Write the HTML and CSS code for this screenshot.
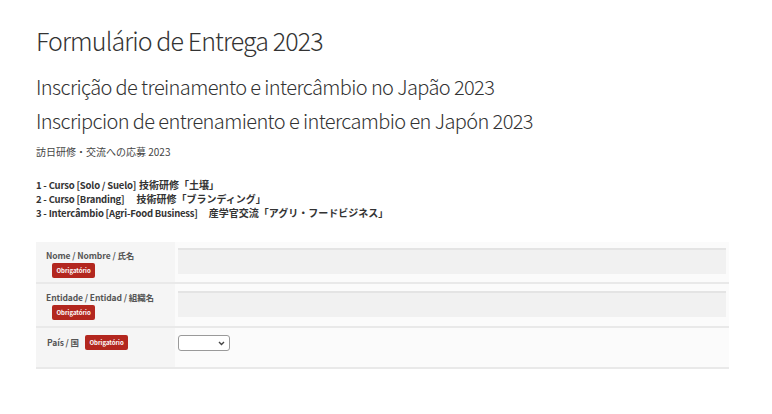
FILE: index.html
```html
<!DOCTYPE html>
<html lang="pt">
<head>
<meta charset="utf-8">
<link rel="stylesheet" href="styles.css">
</head>
<body>
<div class="page">
  <h1 class="title">Formulário de Entrega 2023</h1>
  <h2 class="subtitle first">Inscrição de treinamento e intercâmbio no Japão 2023</h2>
  <h2 class="subtitle">Inscripcion de entrenamiento e intercambio en Japón 2023</h2>
  <p class="jp">訪日研修・交流への応募 2023</p>
  <div class="courses">
    <div class="course"><span class="lat">1 - Curso [Solo / Suelo]</span><span class="cjk gap-s">技術研修「土壌」</span></div>
    <div class="course"><span class="lat">2 - Curso [Branding]</span><span class="cjk gap-l">技術研修「ブランディング」</span></div>
    <div class="course"><span class="lat">3 - Intercâmbio [Agri-Food Business]</span><span class="cjk gap-m">産学官交流「アグリ・フードビジネス」</span></div>
  </div>
  <div class="form">
    <div class="row r1">
      <div class="label">
        <div class="name">Nome / Nombre / 氏名</div>
        <span class="badge">Obrigatório</span>
      </div>
      <div class="field"><div class="input"></div></div>
    </div>
    <div class="row r2">
      <div class="label">
        <div class="name">Entidade / Entidad / 組織名</div>
        <span class="badge">Obrigatório</span>
      </div>
      <div class="field"><div class="input"></div></div>
    </div>
    <div class="row r3">
      <div class="label inline">
        <span class="name">País / 国</span>
        <span class="badge">Obrigatório</span>
      </div>
      <div class="field">
        <div class="select">
          <svg width="7" height="5" viewBox="0 0 7 5"><path d="M1 1 L3.5 3.5 L6 1" fill="none" stroke="#444" stroke-width="1.4"/></svg>
        </div>
      </div>
    </div>
  </div>
</div>
</body>
</html>
```

FILE: styles.css
```css
* { box-sizing: border-box; }
html, body { margin: 0; padding: 0; background: #fff; }
body {
  font-family: "Noto Sans CJK JP", "Noto Sans", sans-serif;
  color: #333;
}
.page {
  padding: 25px 43px 0 36px;
}
.title {
  margin: 0;
  font-size: 25px;
  font-weight: 300;
  letter-spacing: -0.9px;
  line-height: 30px;
  color: #333;
}
.subtitle {
  margin: 0;
  font-size: 20px;
  font-weight: 300;
  letter-spacing: -0.6px;
  line-height: 34px;
  color: #333;
}
.subtitle.first { margin-top: 15px; }
.jp {
  margin: 7px 0 0;
  font-size: 10px;
  line-height: 14px;
  color: #444;
}
.courses {
  margin-top: 19px;
  font-size: 9.5px;
  line-height: 14px;
  font-weight: 600;
  color: #333;
}
.course { height: 14px; white-space: nowrap; }
.lat { letter-spacing: -0.2px; }
.cjk { font-size: 10px; }
.gap-s { margin-left: 3px; }
.gap-m { margin-left: 11px; }
.gap-l { margin-left: 12px; }
.form {
  margin-top: 22px;
  width: 693px;
  background: #fbfbfb;
}
.row {
  display: flex;
  border-bottom: 2px solid #e9e9e9;
}
.r1 { height: 42px; }
.r2 { height: 44px; }
.r3 { height: 41px; }
.label {
  width: 139px;
  background: #f5f5f5;
  padding: 7px 8px 0 10px;
  font-size: 8.5px;
  font-weight: 600;
  color: #555;
}
.name { line-height: 13px; letter-spacing: -0.1px; }
.label .badge { margin-left: 6px; margin-top: 1px; }
.label.inline { display: flex; align-items: flex-start; }
.label.inline .name { margin-left: 1px; margin-top: 1px; }
.label.inline .badge { margin-left: 6px; margin-top: 0; }
.badge {
  display: inline-block;
  background: #b3271f;
  color: #fff;
  font-size: 6px;
  font-weight: 700;
  line-height: 15px;
  height: 15px;
  padding: 0 4.5px;
  border-radius: 2px;
}
.field {
  flex: 1;
  padding: 6px 3px 0 3px;
}
.r2 .field { padding-top: 7px; }
.input {
  height: 26px;
  background: #f1f1f1;
  border-top: 2px solid #e4e4e4;
}
.select {
  width: 52px;
  height: 16px;
  margin-top: 1px;
  border: 1px solid #9a9a9a;
  border-radius: 3px;
  background: #fff;
  display: flex;
  align-items: center;
  justify-content: flex-end;
  padding-right: 4px;
}
```
